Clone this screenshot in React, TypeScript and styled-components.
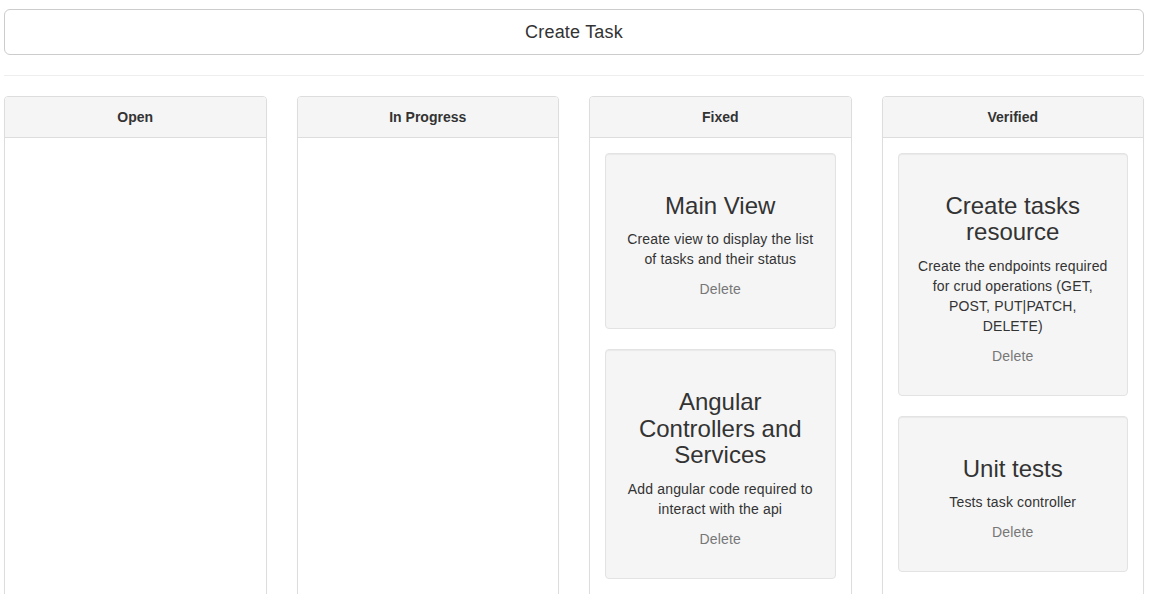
import React from "react";
import styled, { createGlobalStyle } from "styled-components";

const GlobalStyle = createGlobalStyle`
  html, body { margin: 0; padding: 0; background: #fff; }
  body {
    font-family: "Liberation Sans", Arial, Helvetica, sans-serif;
    font-size: 14px;
    line-height: 1.42857143;
    color: #333;
  }
  * { box-sizing: border-box; }
`;

const Page = styled.div`
  padding: 9px 5px 0 4px;
  width: 1149px;
`;

const CreateButton = styled.button`
  display: block;
  width: 100%;
  height: 46px;
  padding: 10px 16px;
  font-family: inherit;
  font-size: 18px;
  line-height: 1.3333333;
  letter-spacing: 0.2px;
  color: #333;
  background: #fff;
  border: 1px solid #ccc;
  border-radius: 6px;
  cursor: pointer;
`;

const Rule = styled.hr`
  margin: 20px 0;
  border: 0;
  border-top: 1px solid #eee;
  height: 0;
`;

const Board = styled.div`
  display: grid;
  grid-template-columns: repeat(4, 1fr);
  column-gap: 30px;
  align-items: start;
`;

const Panel = styled.section`
  border: 1px solid #ddd;
  border-radius: 4px;
  background: #fff;
  min-height: 720px;
  box-shadow: 0 1px 1px rgba(0, 0, 0, 0.05);
`;

const PanelHeading = styled.div`
  padding: 10px 15px;
  background: #f5f5f5;
  border-bottom: 1px solid #ddd;
  border-top-left-radius: 3px;
  border-top-right-radius: 3px;
  text-align: center;
  font-weight: bold;
  font-size: 14px;
  line-height: 20px;
  color: #333;
`;

const PanelBody = styled.div`
  padding: 15px;
`;

const Well = styled.div`
  background: #f5f5f5;
  border: 1px solid #e3e3e3;
  border-radius: 4px;
  padding: 19px;
  margin-bottom: 20px;
  box-shadow: inset 0 1px 1px rgba(0, 0, 0, 0.05);
  text-align: center;
`;

const Title = styled.h3`
  margin: 20px 0 10px;
  font-size: 24px;
  font-weight: 500;
  line-height: 1.1;
  color: #333;
`;

const Description = styled.p`
  margin: 0 0 10px;
  letter-spacing: 0.15px;
`;

const DeleteLine = styled.p`
  margin: 0 0 10px;
`;

const DeleteLink = styled.a`
  color: #777;
  letter-spacing: 0.15px;
  text-decoration: none;
  cursor: pointer;
`;

type Task = { title: string; description: string };

const columns: { name: string; tasks: Task[] }[] = [
  { name: "Open", tasks: [] },
  { name: "In Progress", tasks: [] },
  {
    name: "Fixed",
    tasks: [
      {
        title: "Main View",
        description: "Create view to display the list of tasks and their status",
      },
      {
        title: "Angular Controllers and Services",
        description: "Add angular code required to interact with the api",
      },
    ],
  },
  {
    name: "Verified",
    tasks: [
      {
        title: "Create tasks resource",
        description:
          "Create the endpoints required for crud operations (GET, POST, PUT|PATCH, DELETE)",
      },
      { title: "Unit tests", description: "Tests task controller" },
    ],
  },
];

export default function App() {
  return (
    <>
      <GlobalStyle />
      <Page>
        <CreateButton type="button">Create Task</CreateButton>
        <Rule />
        <Board>
          {columns.map((col) => (
            <Panel key={col.name}>
              <PanelHeading>{col.name}</PanelHeading>
              <PanelBody>
                {col.tasks.map((t) => (
                  <Well key={t.title}>
                    <Title>{t.title}</Title>
                    <Description>{t.description}</Description>
                    <DeleteLine>
                      <DeleteLink>Delete</DeleteLink>
                    </DeleteLine>
                  </Well>
                ))}
              </PanelBody>
            </Panel>
          ))}
        </Board>
      </Page>
    </>
  );
}
